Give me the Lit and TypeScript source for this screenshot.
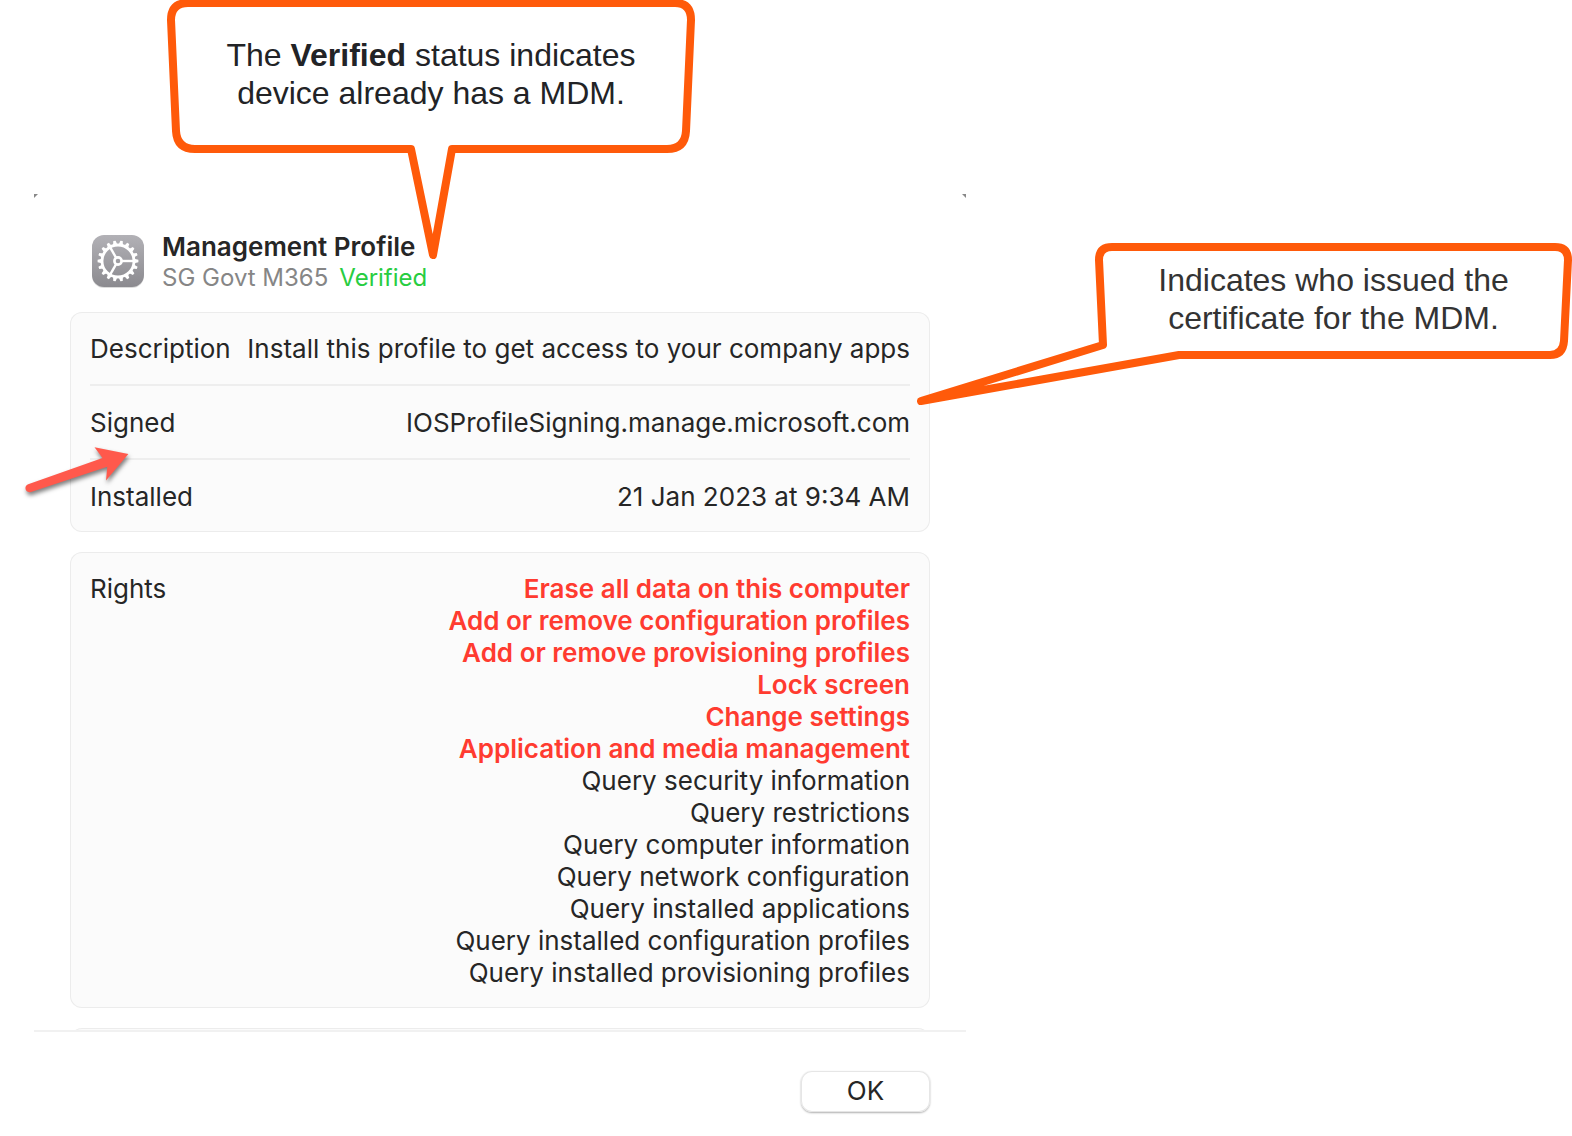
import { LitElement, html, svg, css } from "lit";
import { customElement } from "lit/decorators.js";

const DETAILS = [
  { label: "Description", value: "Install this profile to get access to your company apps" },
  { label: "Signed", value: "IOSProfileSigning.manage.microsoft.com" },
  { label: "Installed", value: "21 Jan 2023 at 9:34 AM" },
];

const RIGHTS = [
  { text: "Erase all data on this computer", critical: true },
  { text: "Add or remove configuration profiles", critical: true },
  { text: "Add or remove provisioning profiles", critical: true },
  { text: "Lock screen", critical: true },
  { text: "Change settings", critical: true },
  { text: "Application and media management", critical: true },
  { text: "Query security information", critical: false },
  { text: "Query restrictions", critical: false },
  { text: "Query computer information", critical: false },
  { text: "Query network configuration", critical: false },
  { text: "Query installed applications", critical: false },
  { text: "Query installed configuration profiles", critical: false },
  { text: "Query installed provisioning profiles", critical: false },
];

const TEETH = Array.from({ length: 18 }, (_, i) => i * 20);
const SPOKES = [0, 120, 240];

@customElement("settings-icon")
class SettingsIcon extends LitElement {
  static styles = css`
    :host { display: block; flex: none; }
    .icon { display: block; width: 52px; height: 54px; overflow: visible; }
  `;
  render() {
    return html`<svg class="icon" viewBox="0 0 52 54" aria-hidden="true">
      <defs>
        <linearGradient id="face" x1="0" y1="0" x2="0" y2="1">
          <stop offset="0" stop-color="#b2b1b6" />
          <stop offset="1" stop-color="#8b8a8f" />
        </linearGradient>
      </defs>
      <rect x="0" y="1" width="52" height="52" rx="12" fill="#000" opacity="0.14" />
      <rect width="52" height="52" rx="12" fill="url(#face)" />
      <g fill="none" stroke="#fff">
        <circle cx="26" cy="26" r="16" stroke-width="2.8" />
        <circle cx="26" cy="26" r="3.6" stroke-width="2.6" />
        ${TEETH.map((a) => svg`<path d="M42 23.8 L46.4 24.8 V27.2 L42 28.2 Z" fill="#fff" stroke="none" transform="rotate(${a} 26 26)" />`)}
        ${SPOKES.map((a) => svg`<path d="M30 26 H42" stroke-width="2.4" transform="rotate(${a} 26 26)" />`)}
      </g>
    </svg>`;
  }
}

@customElement("profile-dialog")
class ProfileDialog extends LitElement {
  static styles = css`
    :host { display: block; }
    .dialog {
      position: relative;
      font-family: Inter, "Liberation Sans", sans-serif;
      font-size: 26px;
      line-height: 32px;
      color: #262626;
    }
    .corner { position: absolute; top: 0; width: 4px; height: 4px; }
    .corner.left { left: 0; background: linear-gradient(135deg, #888 0 40%, transparent 60%); }
    .corner.right { right: 0; background: linear-gradient(225deg, #888 0 40%, transparent 60%); }
    .body { padding: 40px 36px 0; }
    .head { display: flex; align-items: center; gap: 18px; padding: 0 22px; height: 56px; margin-bottom: 22px; }
    .title { margin: 0; font-size: 26px; line-height: 31px; font-weight: 600; }
    .sub { margin: 0; display: flex; gap: 11px; font-size: 24px; line-height: 31px; color: #868686; }
    .verified { color: #28cd41; }
    .card {
      box-sizing: border-box;
      margin: 0 0 20px;
      padding: 0 20px;
      border-radius: 12px;
      background: #fbfbfb;
      box-shadow: inset 0 0 0 1px #ececec;
    }
    .row { display: flex; justify-content: space-between; gap: 12px; padding: 21px 0 19px; }
    .row + .row { border-top: 2px solid #eeeeee; }
    .label, .value { margin: 0; }
    .value { text-align: right; }
    .list { margin: 0; padding: 0; list-style: none; text-align: right; }
    .critical { color: #ff3b30; font-weight: 600; }
    .peek { height: 2px; overflow: hidden; }
    .foot { display: flex; justify-content: flex-end; padding: 39px 36px 24px; border-top: 2px solid #f1f1f1; }
    .ok {
      width: 129px;
      height: 41px;
      padding: 0 0 2px;
      border: 0;
      border-radius: 11px;
      background: #fff;
      box-shadow: inset 0 0 0 1px #e6e6e6, 0 1px 2px #00000050;
      font: inherit;
      color: inherit;
    }
  `;
  render() {
    return html`<section class="dialog" role="dialog" aria-labelledby="title">
      <span class="corner left"></span><span class="corner right"></span>
      <div class="body">
        <header class="head">
          <settings-icon></settings-icon>
          <div>
            <h1 class="title" id="title">Management Profile</h1>
            <p class="sub"><span>SG Govt M365</span><span class="verified">Verified</span></p>
          </div>
        </header>
        <dl class="card">
          ${DETAILS.map((d) => html`<div class="row"><dt class="label">${d.label}</dt><dd class="value">${d.value}</dd></div>`)}
        </dl>
        <dl class="card">
          <div class="row">
            <dt class="label">Rights</dt>
            <dd class="value">
              <ul class="list">
                ${RIGHTS.map((r) => html`<li class=${r.critical ? "critical" : "plain"}>${r.text}</li>`)}
              </ul>
            </dd>
          </div>
        </dl>
        <div class="peek"><div class="card"><div class="row"></div></div></div>
      </div>
      <footer class="foot"><button class="ok" type="button">OK</button></footer>
    </section>`;
  }
}

@customElement("app-root")
class AppRoot extends LitElement {
  static styles = css`
    :host { display: block; background: #fff; }
    .canvas { position: relative; padding: 194px 34px 0; overflow: hidden; }
    .window { display: block; max-width: 932px; }
    .callout { position: absolute; margin: 0; font-family: "Liberation Sans", Arial, sans-serif; font-size: 32px; line-height: 38px; text-align: center; }
    .shape { position: absolute; inset: 0; overflow: visible; fill: #fff; stroke: #ff5a0a; stroke-width: 8; stroke-linejoin: round; }
    .text { position: relative; }
    .status { left: 167px; top: 0; width: 528px; padding-top: 36px; color: #222326; }
    .issuer { left: 1095px; top: 243px; width: 477px; padding-top: 18px; color: #333; }
    .arrow { position: absolute; left: 20px; top: 440px; filter: drop-shadow(1px 3px 2px #00000080); }
  `;
  render() {
    return html`<main class="canvas">
      <profile-dialog class="window"></profile-dialog>
      <svg class="arrow" width="116" height="60" aria-hidden="true">
        <path fill="#ff594c" d="M8.2 44.2 L82.5 18 L74.5 7.2 L108.4 14 L86 40.6 L87.3 26.7 L11 52 A4 4 0 0 1 8.2 44.2 Z" />
      </svg>
      <aside class="callout status">
        <svg class="shape" width="528" height="260" aria-hidden="true">
          <path d="M21 3 H508 Q524 3 524 20 L519 131 Q518 149 500 149 H285 L266 255 L244 149 H28 Q10 149 9 131 L4 20 Q4 3 21 3 Z" />
        </svg>
        <div class="text">The <b>Verified</b> status indicates<br />device already has a MDM.</div>
      </aside>
      <aside class="callout issuer">
        <svg class="shape" width="477" height="162" aria-hidden="true">
          <path d="M17 4 H460 Q473 4 473 17 L469 98 Q468 112 455 112 H84 L-174 158 L8 102 L4 17 Q4 4 17 4 Z" />
        </svg>
        <div class="text">Indicates who issued the<br />certificate for the MDM.</div>
      </aside>
    </main>`;
  }
}
